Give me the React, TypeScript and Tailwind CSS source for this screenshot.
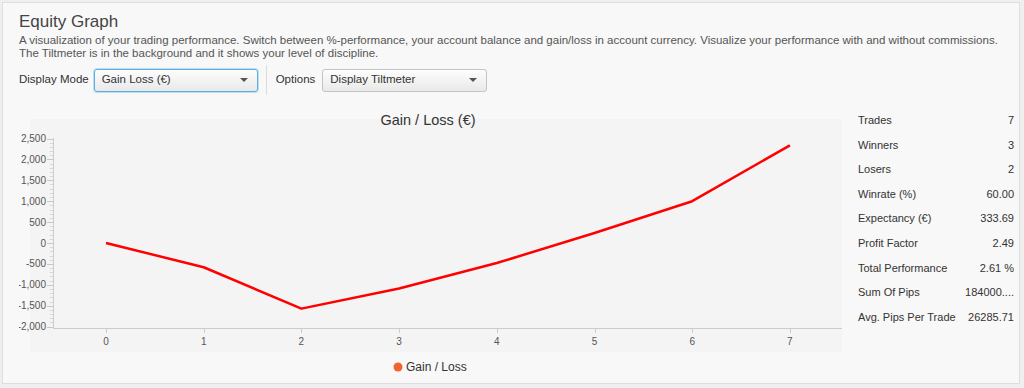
import React from 'react';

const values = [0, -580, -1570, -1090, -480, 240, 1000, 2336];
const stats: [string, string][] = [
  ['Trades', '7'],
  ['Winners', '3'],
  ['Losers', '2'],
  ['Winrate (%)', '60.00'],
  ['Expectancy (€)', '333.69'],
  ['Profit Factor', '2.49'],
  ['Total Performance', '2.61 %'],
  ['Sum Of Pips', '184000....'],
  ['Avg. Pips Per Trade', '26285.71'],
];

// chart svg origin sits at page (19, 108)
const OX = 19;
const OY = 108;
const px = (i: number) => 106 + i * 97.7 - OX;
const py = (v: number) => 244 - v * 0.0418 - OY;

const Select: React.FC<{ label: string; width: string; focused?: boolean }> = ({ label, width, focused }) => (
  <div
    className={`${width} h-[23px] rounded-[3px] flex items-center justify-between pl-[7px] pr-[9px] bg-gradient-to-b from-[#fdfdfd] to-[#e9e9e9] ${
      focused ? 'border border-[#5aaee0] shadow-[0_0_0_1px_rgba(90,174,224,0.35)]' : 'border border-[#c4c4c4]'
    }`}
  >
    <span className="text-[11.5px] text-[#333]">{label}</span>
    <span className="w-0 h-0 border-l-[4px] border-r-[4px] border-t-[4px] border-l-transparent border-r-transparent border-t-[#555]" />
  </div>
);

const Chart: React.FC = () => {
  const yTicks = [2500, 2000, 1500, 1000, 500, 0, -500, -1000, -1500, -2000];
  const minor: number[] = [];
  for (let v = -2000; v < 2500; v += 500) {
    for (let k = 1; k < 5; k++) minor.push(v + k * 100);
  }
  const axisX = 53 - OX;
  const axisY = 329 - OY;
  const points = values.map((v, i) => `${px(i)},${py(v)}`).join(' ');
  return (
    <svg width={823} height={272} className="block shrink-0" style={{ fontFamily: '"Liberation Sans", Arial, sans-serif' }}>
      <rect x={30 - OX} y={120 - OY} width={812} height={233} fill="#f4f4f4" />
      <text x={428 - OX} y={126 - OY} fontSize={14.5} fill="#333" textAnchor="middle">
        Gain / Loss (€)
      </text>
      {/* y axis */}
      <line x1={axisX + 0.5} y1={139 - OY} x2={axisX + 0.5} y2={axisY} stroke="#ccc" />
      {minor.map((v) => (
        <line key={v} x1={axisX - 3} y1={Math.round(py(v)) + 0.5} x2={axisX} y2={Math.round(py(v)) + 0.5} stroke="#d6d6d6" />
      ))}
      {yTicks.map((v) => (
        <g key={v}>
          <line x1={axisX - 6} y1={Math.round(py(v)) + 0.5} x2={axisX} y2={Math.round(py(v)) + 0.5} stroke="#c8c8c8" />
          <text x={46 - OX} y={py(v) + 3.5} fontSize={10} fill="#555" textAnchor="end">
            {v.toLocaleString('en-US')}
          </text>
        </g>
      ))}
      {/* x axis */}
      <line x1={axisX} y1={axisY + 0.5} x2={842 - OX} y2={axisY + 0.5} stroke="#ccc" />
      {values.map((_, i) => (
        <g key={i}>
          <line x1={Math.round(px(i)) + 0.5} y1={axisY} x2={Math.round(px(i)) + 0.5} y2={axisY + 5} stroke="#ccc" />
          <text x={px(i)} y={346 - OY} fontSize={10} fill="#555" textAnchor="middle">
            {i}
          </text>
        </g>
      ))}
      <polyline points={points} fill="none" stroke="#ff0000" strokeWidth={2.5} strokeLinejoin="round" />
      {/* legend */}
      <circle cx={398 - OX} cy={368 - OY} r={4.5} fill="#f3622d" />
      <text x={406 - OX} y={372 - OY} fontSize={12} fill="#333">
        Gain / Loss
      </text>
    </svg>
  );
};

export default function App() {
  return (
    <div className="w-[1024px] h-[388px] bg-[#efefef] pt-[2px] pl-[2px]" style={{ fontFamily: '"Liberation Sans", Arial, sans-serif' }}>
      <div className="w-[1018px] h-[382px] bg-[#f8f8f8] border border-[#dedede] pl-[16px] pr-[5px] pt-[8px]">
        <h1 className="text-[17px] leading-[21px] text-[#444]">Equity Graph</h1>
        <p className="text-[11.5px] leading-[13px] text-[#555] mt-[2px]">
          A visualization of your trading performance. Switch between %-performance, your account balance and gain/loss in account currency. Visualize your performance with and without commissions.
          <br />
          The Tiltmeter is in the background and it shows your level of discipline.
        </p>
        <div className="flex items-center mt-[5px] h-[30px]">
          <span className="text-[11.5px] text-[#333] mr-[5px]">Display Mode</span>
          <Select label="Gain Loss (€)" width="w-[164px]" focused />
          <div className="w-px h-[30px] bg-[#dcdcdc] mx-[8px]" />
          <span className="text-[11.5px] text-[#333] ml-[1px] mr-[7px]">Options</span>
          <Select label="Display Tiltmeter" width="w-[165px]" />
        </div>
        <div className="flex mt-[12px]">
          <Chart />
          <div className="ml-[16px] w-[156px] pt-[7px] flex flex-col gap-[12.6px]">
            {stats.map(([k, v]) => (
              <div key={k} className="flex justify-between text-[11px] leading-[12px] text-[#333]">
                <span>{k}</span>
                <span>{v}</span>
              </div>
            ))}
          </div>
        </div>
      </div>
    </div>
  );
}
